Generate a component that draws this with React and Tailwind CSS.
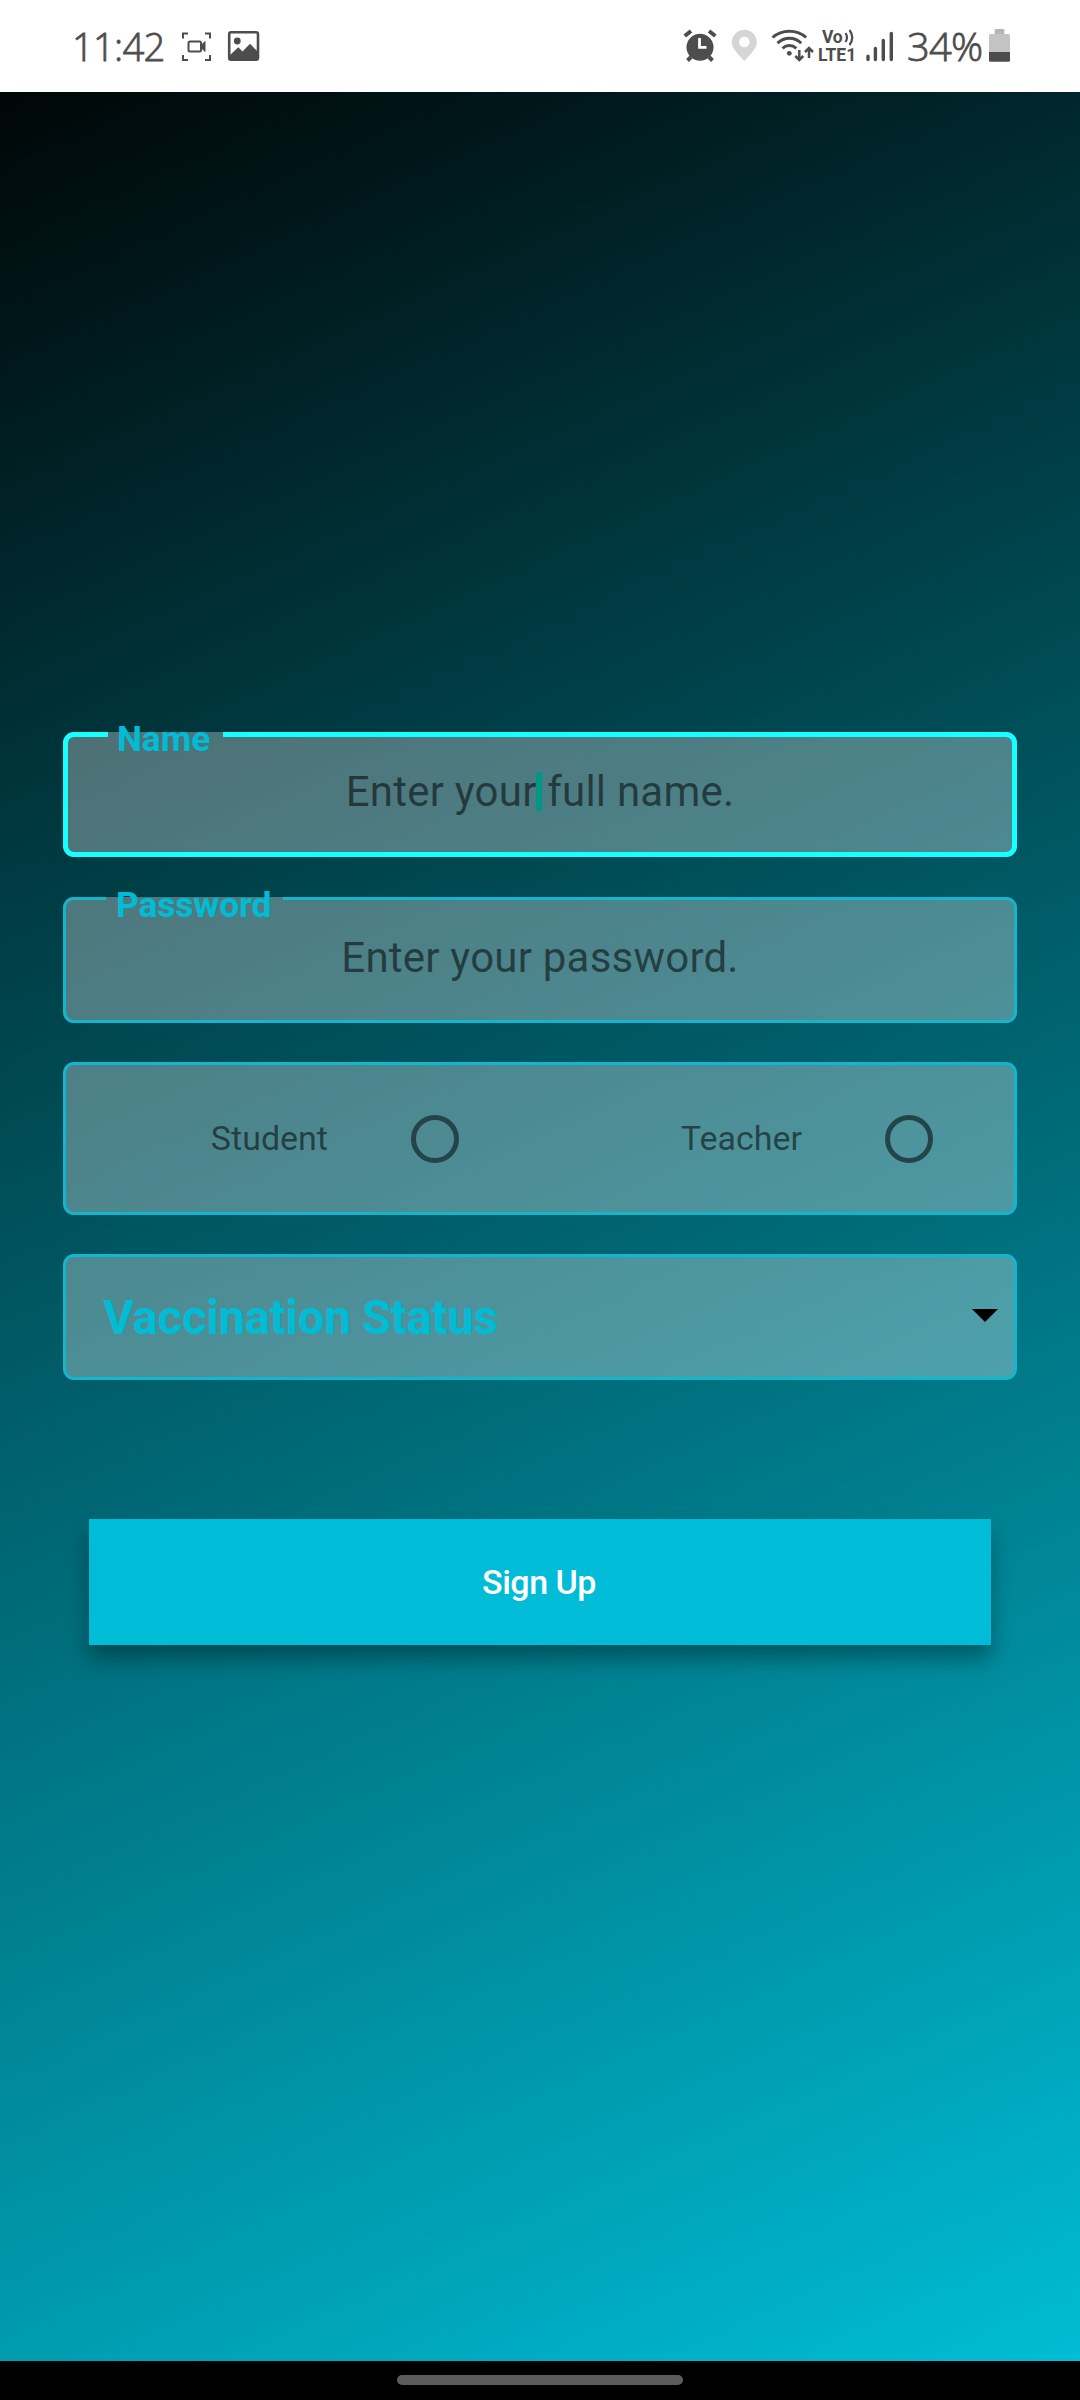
const INK = "#4d4d4d";

function StatusBar() {
  return (
    <header className="flex h-[92px] w-full shrink-0 items-start justify-between bg-white pt-[28px] pl-[72px] pr-[68px] text-[#4d4d4d]">
      <div className="flex h-9 items-start">
        <div className="w-[109px] pt-[4px]">
          <span className="block w-max origin-left scale-x-[0.98] whitespace-nowrap font-['Open_Sans',sans-serif] text-[39px] font-light leading-[28px] tracking-[-0.8px] [-webkit-text-stroke:0.8px_#4d4d4d]">11:42</span>
        </div>
        <svg className="h-9 w-8" viewBox="181 28 32 36" fill="none" stroke={INK} strokeWidth="2">
          <path d="M183 38.500V33.500H188M205 33.500H210V38.500M210 55V60H205M188 60H183V55" />
          <rect x="188.500" y="41.500" width="12.500" height="10" rx="1.500" />
          <path d="M201 45.500L205 41.500V51.500L201 47.500Z" fill={INK} strokeWidth="1" />
        </svg>
        <svg className="ml-[13px] h-9 w-[35px]" viewBox="226 28 35 36">
          <rect x="229.200" y="32.200" width="28.800" height="27.600" rx="2" fill="none" stroke={INK} strokeWidth="2.600" />
          <circle cx="237.300" cy="41" r="3.400" fill={INK} />
          <path d="M230 55L238.300 47.300L242.500 51.500L250 43.700L257.500 51.500V59.500H230Z" fill={INK} />
        </svg>
      </div>
      <div className="flex h-9 items-start">
        <svg className="h-9 w-9" viewBox="682 28 36 36" fill="none" stroke={INK}>
          <circle cx="700" cy="47.200" r="13.500" fill={INK} stroke="none" />
          <path d="M684.800 36L691 31M709 31L715.300 36" strokeWidth="4" />
          <path d="M691 57L687.500 60.500M709 57L712.500 60.500" strokeWidth="4" />
          <path d="M699.500 38V47.300H706.500" stroke="#fff" strokeWidth="2.800" />
        </svg>
        <svg className="ml-[12px] h-9 w-7" viewBox="730 28 28 36">
          <path fillRule="evenodd" fill="#d5d5d5" d="M744.300 29.800A12.500 12.500 0 0 0 731.800 42.300C731.800 49 739 55 744.300 61C749.600 55 756.800 49 756.800 42.300A12.500 12.500 0 0 0 744.300 29.800ZM744.300 36.700A5.300 5.300 0 1 1 744.300 47.300A5.300 5.300 0 1 1 744.300 36.700Z" />
        </svg>
        <svg className="ml-[12px] h-9 w-[45px]" viewBox="770 28 45 36" fill="none" stroke={INK} strokeWidth="3">
          <path d="M772.500 37.500C782 29 797 29 806.200 37.500M777.500 43.200C784.500 36.600 794.500 36.600 801.200 43.200M782.500 48.300C786.500 44.600 792.300 44.600 796.300 48.300" />
          <circle cx="789.300" cy="53.300" r="2.400" fill={INK} stroke="none" />
          <path d="M799.300 50V60M795.300 56L799.300 60L803.300 56M809 58V48M805 52L809 48L813 52" strokeWidth="2.500" />
        </svg>
        <div className="ml-[3px] h-9 w-[41px] pt-[1px] font-[Roboto,sans-serif] text-[17.500px] font-bold leading-[17px]">
          <div className="flex items-start pl-[4px]">
            <span className="w-[22px] tracking-[-0.2px]">Vo</span>
            <svg className="h-[17px] w-[11px] shrink-0" viewBox="843 30 11 17" fill="none" stroke={INK} strokeWidth="2.200">
              <path d="M844.500 34Q847.500 38.500 844.500 43M848.500 31Q854 38.500 848.500 46" />
            </svg>
          </div>
          <div className="pt-[1px]">LTE1</div>
        </div>
        <svg className="ml-[6px] h-9 w-[29px]" viewBox="865 28 29 36" stroke={INK} strokeWidth="3.400" strokeLinecap="round">
          <path d="M868 56.200V59.500M875.400 48.500V59.500M883.300 40.500V59.500M891.300 33.500V59.500" />
        </svg>
        <div className="ml-[13px] w-[80px] pt-[4px]">
          <span className="block w-max origin-left scale-x-[1.02] whitespace-nowrap font-['Open_Sans',sans-serif] text-[39px] font-light leading-[28px] tracking-[-0.7px] [-webkit-text-stroke:0.8px_#4d4d4d]">34%</span>
        </div>
        <svg className="ml-[1px] h-9 w-6" viewBox="988 28 24 36">
          <path d="M994.700 34V30.200Q994.700 29 996 29H1003Q1004.300 29 1004.300 30.200V34Z" fill="#b5b5b5" />
          <path d="M989 52V35.500Q989 34 990.500 34H1008.500Q1010 34 1010 35.500V52Z" fill="#c3c3c3" />
          <path d="M989 52H1010V60.200Q1010 61.700 1008.500 61.700H990.500Q989 61.700 989 60.200Z" fill={INK} />
        </svg>
      </div>
    </header>
  );
}

function NameField() {
  return (
    <fieldset className="m-0 h-[125px] min-w-0 rounded-[11px] border-[5px] border-[#18ffff] bg-white/30 p-0">
      <legend className="ml-[40px] h-0 w-[115px] overflow-visible p-0">
        <span className="ml-[9px] block translate-y-[-17px] text-[35.4px] font-bold leading-[42px] tracking-[-0.1px] text-[#00bcd4]">Name</span>
      </legend>
      <div className="relative flex h-[110px] items-center justify-center text-[42px] leading-[50px] tracking-[0.22px] text-black/54">
        Enter your full name.
        <span className="absolute left-[468px] top-[35px] h-[39px] w-[6px] bg-[#009688]" />
      </div>
    </fieldset>
  );
}

function PasswordField() {
  return (
    <fieldset className="m-0 mt-[40px] h-[126px] min-w-0 rounded-[11px] border-[3px] border-[#12b6cd] bg-white/30 p-0">
      <legend className="ml-[40px] h-0 w-[177px] overflow-visible p-0">
        <span className="ml-[10px] block translate-y-[-15px] text-[35.4px] font-bold leading-[42px] tracking-[-0.15px] text-[#00bcd4]">Password</span>
      </legend>
      <div className="flex h-[116px] items-center justify-center text-[42px] leading-[50px] tracking-[0.22px] text-black/54">
        Enter your password.
      </div>
    </fieldset>
  );
}

function RoleOption({ label }) {
  return (
    <label className="flex w-[474px] shrink-0 items-center justify-end gap-[83px] text-[34px] text-black/54">
      <span>{label}</span>
      <span className="size-[48px] shrink-0 rounded-full border-[5px] border-[#24444a]" />
    </label>
  );
}

export default function App() {
  return (
    <div className="flex h-[2400px] w-[1080px] flex-col overflow-hidden bg-black font-[Roboto,sans-serif]">
      <StatusBar />
      <main className="flex h-[2269px] shrink-0 flex-col bg-[linear-gradient(155.42deg,#000_0%,#00bcd4_100%)] bg-[length:1080px_2361px] bg-bottom bg-no-repeat px-[63px] pt-[640px]">
        <NameField />
        <PasswordField />
        <div className="mt-[39px] flex h-[153px] justify-end rounded-[11px] border-[3px] border-[#12b6cd] bg-white/30 pr-[81px]">
          <RoleOption label="Student" />
          <RoleOption label="Teacher" />
        </div>
        <div className="mt-[39px] flex h-[126px] items-center justify-between rounded-[11px] border-[3px] border-[#12b6cd] bg-white/30 pl-[37px] pr-[16px]">
          <span className="pt-[2px] text-[47.25px] font-bold leading-[56px] tracking-[-0.25px] text-[#00bcd4]">Vaccination Status</span>
          <svg className="mb-[3px] h-[13px] w-[26px]" viewBox="0 0 26 13">
            <path d="M0 0H26L13 13Z" fill="#000" />
          </svg>
        </div>
        <button className="mx-[26px] mt-[139px] h-[126px] bg-[#00bcd7] pr-[2px] text-[34px] font-medium tracking-[-0.5px] text-white shadow-[0_14px_20px_rgba(0,0,0,0.33)]">
          Sign Up
        </button>
      </main>
      <footer className="flex h-[39px] shrink-0 justify-center bg-black pt-[14px]">
        <div className="h-[10px] w-[286px] rounded-full bg-[#5c5c5c]" />
      </footer>
    </div>
  );
}
